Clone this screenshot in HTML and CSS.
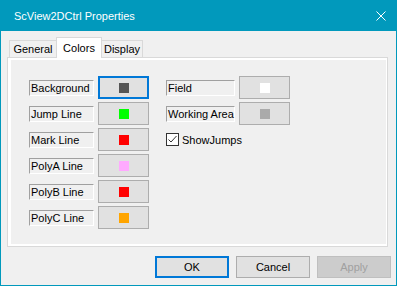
FILE: index.html
```html
<!DOCTYPE html>
<html lang="en">

<head>
    <meta charset="UTF-8">
    <title>ScView2DCtrl Properties</title>
    <link rel="stylesheet" href="styles.css">
</head>

<body>
    <div class="window">
        <div class="titlebar">
            <span class="title">ScView2DCtrl Properties</span>
            <svg class="close" width="10" height="10" viewBox="0 0 10 10">
                <path d="M0.5 0.5 L9.5 9.5 M9.5 0.5 L0.5 9.5" stroke="#fff" stroke-width="1" fill="none" />
            </svg>
        </div>

        <div class="tabs">
            <div class="tab tab-general">General</div>
            <div class="tab tab-colors active">Colors</div>
            <div class="tab tab-display">Display</div>
        </div>

        <div class="panel">
            <div class="page">
                <div class="column">
                    <div class="row">
                        <div class="caption">Background</div>
                        <div class="swatch-btn focused"><span class="swatch sw-background"></span></div>
                    </div>
                    <div class="row">
                        <div class="caption">Jump Line</div>
                        <div class="swatch-btn"><span class="swatch sw-jump"></span></div>
                    </div>
                    <div class="row">
                        <div class="caption">Mark Line</div>
                        <div class="swatch-btn"><span class="swatch sw-mark"></span></div>
                    </div>
                    <div class="row">
                        <div class="caption">PolyA Line</div>
                        <div class="swatch-btn"><span class="swatch sw-polya"></span></div>
                    </div>
                    <div class="row">
                        <div class="caption">PolyB Line</div>
                        <div class="swatch-btn"><span class="swatch sw-polyb"></span></div>
                    </div>
                    <div class="row">
                        <div class="caption">PolyC Line</div>
                        <div class="swatch-btn"><span class="swatch sw-polyc"></span></div>
                    </div>
                </div>

                <div class="column right">
                    <div class="row">
                        <div class="caption">Field</div>
                        <div class="swatch-btn"><span class="swatch sw-field"></span></div>
                    </div>
                    <div class="row">
                        <div class="caption">Working Area</div>
                        <div class="swatch-btn"><span class="swatch sw-area"></span></div>
                    </div>
                    <div class="row check-row">
                        <svg class="checkbox" width="13" height="13" viewBox="0 0 13 13">
                            <rect x="0.5" y="0.5" width="12" height="12" fill="#fff" stroke="#333" />
                            <path d="M2.5 6.5 L5 9 L10.5 3" stroke="#333" stroke-width="1" fill="none" />
                        </svg>
                        <span>ShowJumps</span>
                    </div>
                </div>
            </div>
        </div>

        <div class="buttons">
            <div class="btn focused">OK</div>
            <div class="btn">Cancel</div>
            <div class="btn disabled">Apply</div>
        </div>
    </div>
</body>

</html>
```

FILE: styles.css
```css
body {
    margin: 0;
    font-family: "Liberation Sans", Arial, sans-serif;
    font-size: 11px;
    color: #000;
    background: #f0f0f0;
}

.window {
    width: 397px;
    height: 286px;
    box-sizing: border-box;
    border: 1px solid #0199bc;
    background: #f0f0f0;
}

.titlebar {
    height: 30px;
    background: #0199bc;
    display: flex;
    align-items: center;
    justify-content: space-between;
    padding: 0 10px 0 13px;
    color: #fff;
}

.title {
    font-size: 11px;
}

.tabs {
    display: flex;
    align-items: flex-end;
    height: 20px;
    margin-top: 6px;
    padding-left: 8px;
}

.tab {
    box-sizing: border-box;
    height: 17px;
    border: 1px solid #d9d9d9;
    border-bottom: none;
    background: #f0f0f0;
    display: flex;
    align-items: center;
    justify-content: center;
}

.tab-general {
    width: 48px;
}

.tab-colors {
    width: 46px;
    margin-left: -1px;
}

.tab-display {
    width: 42px;
    margin-left: -1px;
}

.tab.active {
    height: 21px;
    margin-bottom: -1px;
    background: #fff;
    position: relative;
    z-index: 1;
}

.panel {
    margin-left: 6px;
    width: 381px;
    height: 190px;
    box-sizing: border-box;
    border: 1px solid #d9d9d9;
    background: #fff;
    padding: 2px 1px 2px 3px;
}

.page {
    height: 100%;
    box-sizing: border-box;
    background: #f0f0f0;
    padding: 16px 0 0 18px;
    display: flex;
    gap: 17px;
}

.column {
    display: flex;
    flex-direction: column;
    gap: 3px;
}

.row {
    display: flex;
    align-items: center;
    gap: 4px;
    height: 23px;
}

.caption {
    width: 65px;
    height: 16px;
    box-sizing: border-box;
    border: 1px solid;
    border-color: #a0a0a0 #fff #fff #a0a0a0;
    padding-left: 1px;
    line-height: 14px;
    white-space: nowrap;
}

.right .caption {
    width: 69px;
}

.swatch-btn {
    width: 51px;
    height: 23px;
    box-sizing: border-box;
    border: 1px solid #adadad;
    background: #e1e1e1;
    display: flex;
    align-items: center;
    justify-content: center;
}

.swatch-btn.focused {
    border: 2px solid #0078d7;
}

.swatch {
    width: 10px;
    height: 10px;
}

.sw-background { background: #555555; }
.sw-jump { background: #00ff00; }
.sw-mark { background: #ff0000; }
.sw-polya { background: #ffaaff; }
.sw-polyb { background: #ff0000; }
.sw-polyc { background: #ffa500; }
.sw-field { background: #ffffff; }
.sw-area { background: #aaaaaa; }

.check-row {
    gap: 3px;
}

.checkbox {
    display: block;
}

.buttons {
    display: flex;
    justify-content: flex-end;
    gap: 7px;
    margin-top: 9px;
    padding-right: 5px;
}

.btn {
    width: 74px;
    height: 22px;
    box-sizing: border-box;
    border: 1px solid #adadad;
    background: #e1e1e1;
    display: flex;
    align-items: center;
    justify-content: center;
}

.btn.focused {
    border: 2px solid #0078d7;
}

.btn.disabled {
    background: #cccccc;
    border-color: #bfbfbf;
    color: #a0a0a0;
}
```
